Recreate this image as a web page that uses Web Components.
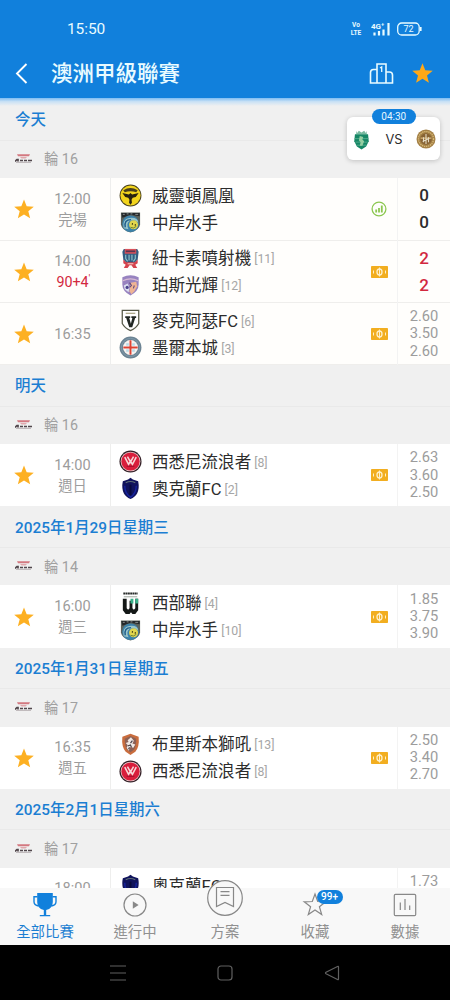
<!DOCTYPE html>
<html lang="zh-Hant">
<head>
<meta charset="utf-8">
<meta name="viewport" content="width=device-width, initial-scale=1">
<title>澳洲甲級聯賽</title>
<style>
    html, body { margin: 0; height: 100%; }
    body {
        overflow: hidden;
        background: #f0f0f0;
        font-family: Roboto, "Noto Sans CJK TC", sans-serif;
        color: #2c2c2c;
    }
</style>
</head>
<body>
<league-page>
    <app-bar slot="header" time="15:50">澳洲甲級聯賽</app-bar>
    <match-day round="輪 16">今天
        <match-row slot="rows" time="12:00" state="完場" icon="stats" tint>
            <team-line crest="phoenix">威靈頓鳳凰</team-line>
            <team-line crest="mariners">中岸水手</team-line>
            <b slot="odds">0</b><b slot="odds">0</b>
        </match-row>
        <match-row slot="rows" time="14:00" state="90+4" icon="pitch" tint live>
            <team-line crest="jets" rank="[11]">紐卡素噴射機</team-line>
            <team-line crest="glory" rank="[12]">珀斯光輝</team-line>
            <b slot="odds">2</b><b slot="odds">2</b>
        </match-row>
        <match-row slot="rows" time="16:35" icon="pitch" tint>
            <team-line crest="macarthur" rank="[6]">麥克阿瑟FC</team-line>
            <team-line crest="city" rank="[3]">墨爾本城</team-line>
            <span slot="odds">2.60</span><span slot="odds">3.50</span><span slot="odds">2.60</span>
        </match-row>
    </match-day>
    <match-day round="輪 16">明天
        <match-row slot="rows" time="14:00" state="週日" icon="pitch">
            <team-line crest="wanderers" rank="[8]">西悉尼流浪者</team-line>
            <team-line crest="auckland" rank="[2]">奧克蘭FC</team-line>
            <span slot="odds">2.63</span><span slot="odds">3.60</span><span slot="odds">2.50</span>
        </match-row>
    </match-day>
    <match-day round="輪 14">2025年1月29日星期三
        <match-row slot="rows" time="16:00" state="週三" icon="pitch">
            <team-line crest="western" rank="[4]">西部聯</team-line>
            <team-line crest="mariners" rank="[10]">中岸水手</team-line>
            <span slot="odds">1.85</span><span slot="odds">3.75</span><span slot="odds">3.90</span>
        </match-row>
    </match-day>
    <match-day round="輪 17">2025年1月31日星期五
        <match-row slot="rows" time="16:35" state="週五" icon="pitch">
            <team-line crest="roar" rank="[13]">布里斯本獅吼</team-line>
            <team-line crest="wanderers" rank="[8]">西悉尼流浪者</team-line>
            <span slot="odds">2.50</span><span slot="odds">3.40</span><span slot="odds">2.70</span>
        </match-row>
    </match-day>
    <match-day round="輪 17">2025年2月1日星期六
        <match-row slot="rows" time="18:00" icon="none" clipped>
            <team-line crest="auckland">奧克蘭FC</team-line>
            <span slot="odds">1.73</span>
        </match-row>
    </match-day>
    <match-float slot="float" time="04:30">VS</match-float>
    <tab-bar slot="footer">
        <tab-item icon="cup" active>全部比賽</tab-item>
        <tab-item icon="play">進行中</tab-item>
        <tab-item icon="plan" raised>方案</tab-item>
        <tab-item icon="star" badge="99+">收藏</tab-item>
        <tab-item icon="chart">數據</tab-item>
    </tab-bar>
    <system-keys slot="footer"></system-keys>
</league-page>

<script>
const STAR = 'M12 1.2l2.9 7.3 7.8.5-6 5 2 7.6-6.7-4.2-6.7 4.2 2-7.6-6-5 7.8-.5z';

const CRESTS = {
    phoenix: `
        <circle cx="12" cy="12" r="11.4" fill="#4b4320"/><circle cx="12" cy="12" r="10.5" fill="#f2d41c"/>
        <path d="M4.5 6.5Q12 2 19.500 6.500L18 8.600Q12 6.600 6 8.600z" fill="#4a401c"/>
        <path d="M3.500 9.500L10.300 11l1.700-1.600 1.700 1.600 6.800-1.500-3 4-3.200.9-1.200 2 .4 3.200-1.500 2-1.500-2 .4-3.200-1.200-2-3.200-.9z" fill="#29230f"/>`,
    mariners: `
        <path d="M2 1.500h20V14q-1 6-10 8.500Q3 20 2 14z" fill="#5a625b"/>
        <path d="M2.500 2h19v3.500L12 4 3.500 7z" fill="#24282b"/>
        <path d="M4 3.500h2M8 3h2M12 3h2M17 3.500h3" stroke="#aab0ac" stroke-width=".8"/>
        <circle cx="12" cy="13.300" r="8.700" fill="#3c82aa"/>
        <path d="M5 18Q3 7 13 7q7 0 7 5-4-4-9-1.500-4 3-1 8.500z" fill="#9bc6c9"/>
        <path d="M6.500 17Q5 9 12.500 9" fill="none" stroke="#205f8c" stroke-width="1.500"/>
        <circle cx="15.200" cy="14.300" r="4.700" fill="#e1d54c"/><path d="M12 17q3 2 6-1" fill="none" stroke="#48682e" stroke-width=".8"/>
        <circle cx="14" cy="13.500" r=".7"/><circle cx="17" cy="14.500" r=".7"/>`,
    jets: `
        <path d="M5 2h14l1.500 3-1 8-3.500 4h-8l-3.500-4-1-8z" fill="#335d82"/>
        <path d="M6 2h12v5H6z" fill="#d8525b"/><path d="M7 4.500h10" stroke="#5b3450" stroke-width="1.800"/>
        <path d="M7 8v4l2 3M10.500 8v6M13.500 8v6M17 8v4l-2 3" stroke="#8bc4cc" stroke-width="1.200" fill="none"/>
        <path d="M4.500 13l3 3h9l3-3v4l-2.500 1.500L19 22h-4l-2-3h-2l-2 3H5l2-3.500L4.500 17z" fill="#d5434d"/>
        <path d="M9 17.500h6" stroke="#f6c0b8" stroke-width="1.200"/>`,
    glory: `
        <path d="M3.500 3.500Q12-1 20.500 3.500V11q0 7-8.500 11.500Q3.500 18 3.500 11z" fill="#9883bf"/>
        <path d="M4 7Q12 3 20 7" stroke="#d8bbd3" stroke-width="1.300" fill="none"/>
        <path d="M12 9l6-1 1 5-3 5-3 3-2-3z" fill="#efb494"/>
        <path d="M5 12l4-2 2 4-1 5-4-3z" fill="#dce0ef"/>
        <circle cx="8.500" cy="14" r="1.700" fill="#4d438d"/><path d="M11 9l2 3-2 2m5-2l-1 3" stroke="#60497d" stroke-width="1.100" fill="none"/>`,
    macarthur: `
        <path d="M3.400 1.500h17.200v13.700q-2.600 4.800-8.600 7.300-6-2.500-8.600-7.300z" fill="#fff" stroke="#555847" stroke-width="1.300"/>
        <path d="M7 4.500h10" stroke="#aaa586" stroke-width="1.300"/>
        <path d="M6.500 7.500h5.200v2h-1l1.700 6 1.500-6h-1v-2h5v2h-1L13.800 19h-3.100L7.500 9.500h-1z" fill="#202623"/>`,
    city: `
        <circle cx="12" cy="12" r="11.400" fill="#6c8392"/><circle cx="12" cy="12" r="9.500" fill="none" stroke="#7e9aab" stroke-width="1"/>
        <circle cx="12" cy="12" r="7.800" fill="#f6f1ee"/><path d="M7.500 7.500h9v9h-9z" fill="#b9dbe8"/>
        <path d="M12 4.500v15M4.500 12h15" stroke="#fff" stroke-width="3.400"/><path d="M12 4.500v15M4.500 12h15" stroke="#dc4333" stroke-width="2.100"/>`,
    wanderers: `
        <circle cx="12" cy="12" r="11.500" fill="#342027"/><circle cx="12" cy="12" r="10.300" fill="#e6c7c9"/>
        <circle cx="12" cy="12" r="9.500" fill="#d91e3c"/>
        <path d="M6 7.500l4 7.500 2-3.500 2 3.500 4-7.500M8.800 7l3.200 5.500L15.200 7" fill="none" stroke="#f8d7d8" stroke-width="1.600"/>
        <path d="M8 17h8" stroke="#a20f2d" stroke-width="1.200"/>`,
    auckland: `
        <path d="M9.500 2.500L12 .8l2.500 1.700 5.500 2q1.500 7-1 12.500-2 4-7 6-5-2-7-6Q2.500 11.500 4 4.500z" fill="#10135c"/>
        <path d="M7 6q5-2.500 10 0" fill="none" stroke="#617177" stroke-width="1.100"/>
        <path d="M6 9q0 8 6 12 6-4 6-12" fill="none" stroke="#1724a0" stroke-width="1.400"/><path d="M12 8v11" stroke="#08093c" stroke-width="2"/>`,
    western: `
        <path d="M4.500 1.500h15" stroke="#292d2b" stroke-width="2" stroke-dasharray="2 .4"/>
        <path d="M5 5h14" stroke="#9ba39b" stroke-width="1"/>
        <path d="M4 7h4v10l1.500 1.500L11 17V9h3v8l1.500 1.500L17 17V7h3v12l-3 4h-3l-1.500-2-1.500 2H7l-3-4z" fill="#141817"/>
        <path d="M12 7h3v5h-3zM17 7h3v5h-3z" fill="#38b18a"/>`,
    roar: `
        <path d="M3.500 4L12 .8 20.500 4q1 11-3.500 15.500L12 23l-5-3.500Q2.500 15 3.500 4z" fill="#c96d3e"/>
        <path d="M6 6l6-2.800L18 6q0 8-2.500 11.500L12 20l-3.500-2.500Q6 14 6 6z" fill="#8c6156"/>
        <path d="M12.500 4.500l3 3.500-1.500 3 3 1-2 3.500-3-1-2 4-2-3 1-3-2-2 3-1-1-2z" fill="#f1e8e4"/>
        <path d="M14 8l-2 2.500m-3 3l3-1 1 2.500m-3 2l1-2" stroke="#423c43" stroke-width="1.200" fill="none"/>`,
    sporting: `
        <path d="M6 2l1 2.500L9 2l3 2 3-2 2 2.500L18 2v4H6z" fill="#78b99f"/>
        <path d="M4.500 6h15l.8 8-3 6-5.300 3.500L6.700 20l-3-6z" fill="#168765"/>
        <path d="M4 11h16M5 15h14M6.500 18.500h11" stroke="#58ad90" stroke-width="1"/>
        <path d="M10 8l4 1-1 3 2 2-2 5h-3l1-4-2-2z" fill="#95cfa2"/>`,
    nacional: `
        <circle cx="12" cy="12" r="11.400" fill="#a48046"/><circle cx="12" cy="12" r="9" fill="none" stroke="#d9bc79" stroke-width="1.500" stroke-dasharray="1.500 1"/>
        <circle cx="12" cy="12" r="7" fill="#876334"/><path d="M5.500 10h13v2h-13z" fill="#c4a26a"/>
        <path d="M12 6v12M9 10v6M15 10v6M8 15l8-4" stroke="#e5dbc2" stroke-width="1.300"/>`
};

const TABS = {
    cup: `
        <path d="M6.200 2h15.600v9q0 6.500-6.600 8v5h4v1.300H8.800V24h4v-5q-6.600-1.500-6.600-8z" fill="#1180dc"/>
        <path d="M6.500 5.700H3v5q0 3.500 4.500 4.300M21.500 5.700H25v5q0 3.500-4.500 4.300" fill="none" stroke="#1180dc" stroke-width="1.400"/>`,
    play: `<circle cx="14" cy="14" r="11"/><path d="M11.800 10.200v7.600l5.800-3.800z" fill="#888" stroke="none"/>`,
    plan: `<circle cx="19" cy="19" r="17.300" fill="#f8f8f8"/><path d="M10.500 8.500h17V27.500L19 23.500l-8.500 4z"/><path d="M14.500 12.700h9M14.500 16.300h9"/>`,
    star: `<path d="M14 3l2.700 7.500 8.100.3-6.400 4.900 2.300 7.900L14 19l-6.700 4.600 2.300-7.900-6.400-4.900 8.100-.3z"/>`,
    chart: `<rect x="3.300" y="3.300" width="21.400" height="21.400" rx="1.200"/><path d="M9.300 11.500v7.500M14 8v11M18.700 14.500v4.500"/>`
};

class LeaguePage extends HTMLElement {
    constructor() {
        super();
        this.attachShadow({ mode: 'open' });
        this.shadowRoot.innerHTML = `
            <style>
                :host { display: grid; grid-template-rows: 98px 789.500px auto; height: 1000px; position: relative; }
                .list { overflow: hidden; padding-top: 1.300px; box-sizing: border-box; }
                .head { z-index: 2; }
                .foot { z-index: 1; }
            </style>
            <div class="head"><slot name="header"></slot></div>
            <div class="list"><slot></slot></div>
            <div class="foot"><slot name="footer"></slot></div>
            <slot name="float"></slot>
        `;
    }
}

class AppBar extends HTMLElement {
    constructor() {
        super();
        this.attachShadow({ mode: 'open' });
    }

    connectedCallback() {
        this.shadowRoot.innerHTML = `
            <style>
                :host { display: block; position: relative; height: 98px; background: #1180dc; color: #e9fbff; }
                .status { display: flex; align-items: center; height: 50px; padding: 7px 28px 0 67px; box-sizing: border-box; }
                .clock { flex: 1; font-size: 15.500px; letter-spacing: -.1px; }
                .volte { display: grid; font: bold 6.500px/8px Roboto; text-align: center; width: 12px; margin-right: 9px; }
                .sig { display: block; margin-right: 6px; }
                .batt { display: block; }
                .bar { display: flex; align-items: center; height: 48px; padding: 0 16px 0 15px; box-sizing: border-box; }
                .back { margin-right: 23px; }
                h1 { flex: 1; margin: 0; font-size: 21.500px; line-height: 30px; font-weight: 500; }
                .podium { margin-right: 17px; }
                svg { display: block; }
                /* soft edge that falls over the list */
                .edge { position: absolute; top: 98px; left: 0; right: 0; height: 8px; background: linear-gradient(#7dbcf2, #c9e1f5 45%, #f0f0f000); }
            </style>
            <div class="status">
                <span class="clock">${this.getAttribute('time')}</span>
                <div class="volte"><span>Vo</span><span>LTE</span></div>
                <svg class="sig" width="20" height="14" viewBox="0 0 20 14">
                    <text x="0" y="6.800" font-family="Roboto" font-size="8" font-weight="700" fill="#e9fbff">4G⁺</text>
                    <path d="M3.500 13.500v-3M8 13.500V9M12.500 13.500V7.500M17.500 13.500V1" stroke="#e9fbff" stroke-width="2.200"/>
                </svg>
                <svg class="batt" width="25" height="14" viewBox="0 0 25 14">
                    <rect x=".7" y="1" width="21.500" height="12" rx="4" fill="none" stroke="#e9fbff" stroke-width="1.300"/>
                    <path d="M23.800 5v4" stroke="#e9fbff" stroke-width="1.600"/>
                    <text x="11.500" y="10.300" text-anchor="middle" font-family="Roboto" font-size="9" fill="#e9fbff">72</text>
                </svg>
            </div>
            <div class="bar">
                <svg class="back" width="13" height="22" viewBox="0 0 13 22"><path d="M11.500 1L2 10.500l9.500 9.500" fill="none" stroke="#fff" stroke-width="1.900"/></svg>
                <h1><slot></slot></h1>
                <svg class="podium" width="25" height="22" viewBox="0 0 25 22">
                    <path d="M8 20V1h9v19M8 6.500H4.500q-3 0-3 3V20h22v-8q0-3-3-3H17M1.500 20h22" fill="none" stroke="#e9fbff" stroke-width="1.600"/>
                    <path d="M11 5l1.700-1v5" fill="none" stroke="#e9fbff" stroke-width="1.300"/>
                </svg>
                <svg width="23" height="25" viewBox="0 0 24 26"><path d="${STAR}" fill="#ffa817"/></svg>
            </div>
            <div class="edge"></div>
        `;
    }
}

class MatchDay extends HTMLElement {
    constructor() {
        super();
        this.attachShadow({ mode: 'open' });
    }

    connectedCallback() {
        this.shadowRoot.innerHTML = `
            <style>
                :host { display: block; background: #f0f0f0; }
                .date {
                    display: flex; align-items: center; height: 41.400px; padding: 0 0 2px 15px;
                    box-sizing: border-box; border-bottom: 1px solid #e9e9e9;
                    color: #1b7ed2; font-size: 15.400px; font-weight: 500;
                }
                .round { display: flex; align-items: center; gap: 12px; height: 37.500px; padding: 0 0 3px 15px; box-sizing: border-box; color: #a0a0a0; font-size: 14.300px; }
                svg { display: block; }
            </style>
            <div class="date"><span><slot></slot></span></div>
            <div class="round">
                <svg width="17" height="10" viewBox="0 0 17 10">
                    <path d="M2 1.200h13l-1 2H3z" fill="#d37880"/><path d="M5 4h7l-1.500 1.500h-4z" fill="#dfa8ad"/>
                    <path d="M0 8.500l2-2h1v2M5 7.500h3M9 7.500h3M13 7.500h4" stroke="#51474c" stroke-width="1.700" fill="none"/>
                    <path d="M1 9.300h15" stroke="#9c9295" stroke-width=".7"/>
                </svg>
                <span>${this.getAttribute('round')}</span>
            </div>
            <slot name="rows"></slot>
        `;
    }
}

class MatchRow extends HTMLElement {
    constructor() {
        super();
        this.attachShadow({ mode: 'open' });
    }

    connectedCallback() {
        const state = this.getAttribute('state');
        const icons = {
            stats: `<svg width="16" height="16" viewBox="0 0 16 16">
                <circle cx="8" cy="8" r="6.900" fill="none" stroke="#8cc751" stroke-width="1.300"/>
                <path d="M5.200 8.500v3M8 7v4.500M10.800 4.500v7" stroke="#8cc751" stroke-width="1.800"/></svg>`,
            pitch: `<svg width="17" height="12" viewBox="0 0 17 12">
                <rect width="17" height="12" rx=".8" fill="#f2ae20"/><ellipse cx="8.500" cy="6" rx="2.500" ry="3" fill="none" stroke="#fff0c9" stroke-width="1.300"/>
                <path d="M8.500 1.500v9M2.500 4.500v3M14.500 4.500v3" stroke="#fff0c9" stroke-width="1"/></svg>`,
            none: ''
        };
        this.shadowRoot.innerHTML = `
            <style>
                :host {
                    display: grid; grid-template-columns: 48px 63px 1fr 36px 53px; height: 62.350px;
                    box-sizing: border-box; background: #fff; color: #2c2c2c; font-weight: 400;
                }
                :host([tint]) { background: #fffefc; box-shadow: inset 0 -1px #efeeec; }
                .star, .icon { display: flex; align-items: center; justify-content: center; }
                .time { display: flex; flex-direction: column; justify-content: center; align-items: center; border-right: 1px solid #eeeeed; padding: 1px 13px 0 0; font-size: 14.300px; line-height: 21px; color: #9c9c9c; }
                .time span:first-child { font-size: 14.600px; }
                :host([live]) .state { color: #d2283f; }
                sup { display: inline-block; width: 0; font-size: 10px; line-height: 0; vertical-align: 5px; }
                .teams { display: flex; flex-direction: column; justify-content: center; padding-left: 8px; }
                .odds { display: flex; flex-direction: column; justify-content: center; align-items: center; border-left: 1px solid #f3f3f3; font-size: 14.700px; line-height: 17.200px; color: #9c9c9c; }
                ::slotted(b) { font-size: 17px; line-height: 27px; font-weight: 500; color: #2c2c2c; }
                :host([live]) ::slotted(b) { color: #d2283f; }
                :host([clipped]) .star svg { display: none; }
                :host([clipped]) .time { justify-content: flex-start; padding-top: 10px; }
                :host([clipped]) .teams { justify-content: flex-start; padding-top: 4.500px; }
                :host([clipped]) .odds { justify-content: flex-start; padding-top: 5.500px; }
            </style>
            <div class="star"><svg width="22" height="22" viewBox="0 0 24 23"><path d="${STAR}" fill="#fdb022"/></svg></div>
            <div class="time">
                <span>${this.getAttribute('time')}</span>
                ${state ? `<span class="state">${state}${this.hasAttribute('live') ? '<sup>\'</sup>' : ''}</span>` : ''}
            </div>
            <div class="teams"><slot></slot></div>
            <div class="icon">${icons[this.getAttribute('icon')]}</div>
            <div class="odds"><slot name="odds"></slot></div>
        `;
    }
}

class TeamLine extends HTMLElement {
    constructor() {
        super();
        this.attachShadow({ mode: 'open' });
    }

    connectedCallback() {
        this.shadowRoot.innerHTML = `
            <style>
                :host { display: flex; align-items: center; height: 27px; font-size: 16.550px; line-height: 24px; white-space: nowrap; }
                club-crest { margin-right: 10px; }
                .name { padding-top: 2px; }
                .rank { margin: 2px 0 0 3px; font-size: 12.300px; color: #a6a6a6; }
            </style>
            <club-crest name="${this.getAttribute('crest')}"></club-crest>
            <span class="name"><slot></slot></span>
            <span class="rank">${this.getAttribute('rank') || ''}</span>
        `;
    }
}

class ClubCrest extends HTMLElement {
    constructor() {
        super();
        this.attachShadow({ mode: 'open' });
    }

    connectedCallback() {
        const size = this.getAttribute('size') || 23;
        this.shadowRoot.innerHTML = `
            <style>
                :host { display: block; flex: none; }
                svg { display: block; }
            </style>
            <svg width="${size}" height="${size}" viewBox="0 0 24 24">${CRESTS[this.getAttribute('name')]}</svg>
        `;
    }
}

/* Small card floating over the list with the next followed match */
class MatchFloat extends HTMLElement {
    constructor() {
        super();
        this.attachShadow({ mode: 'open' });
    }

    connectedCallback() {
        this.shadowRoot.innerHTML = `
            <style>
                :host {
                    position: absolute; top: 117px; right: 10px; width: 93px; height: 43px; box-sizing: border-box;
                    display: flex; align-items: center; justify-content: space-between; padding: 1px 4px 0;
                    background: #fff; border-radius: 6px; box-shadow: 0 1px 5px rgba(0, 0, 0, .2);
                    font-family: Inter, sans-serif; font-size: 12.800px; z-index: 1;
                }
                .pill {
                    position: absolute; top: -8px; left: 25px; width: 43.500px; height: 15px; border-radius: 8px;
                    background: #1180dc; color: #e6f7ff; font: 10px/15.500px Roboto, sans-serif; text-align: center;
                }
            </style>
            <club-crest name="sporting" size="21"></club-crest>
            <span><slot></slot></span>
            <club-crest name="nacional" size="20"></club-crest>
            <div class="pill">${this.getAttribute('time')}</div>
        `;
    }
}

class TabBar extends HTMLElement {
    constructor() {
        super();
        this.attachShadow({ mode: 'open' });
        this.shadowRoot.innerHTML = `
            <style>
                :host { display: grid; grid-template-columns: repeat(5, 1fr); height: 57.500px; background: #f8f8f8; }
            </style>
            <slot></slot>
        `;
    }
}

class TabItem extends HTMLElement {
    constructor() {
        super();
        this.attachShadow({ mode: 'open' });
    }

    connectedCallback() {
        const raised = this.hasAttribute('raised');
        const size = raised ? 38 : 28;
        const badge = this.getAttribute('badge');
        this.shadowRoot.innerHTML = `
            <style>
                :host { display: flex; flex-direction: column; align-items: center; position: relative; padding-top: 3.500px; color: #909090; font-size: 14.400px; line-height: 20px; }
                :host([active]) { color: #1b7ed2; }
                svg { display: block; flex: none; margin-bottom: 4px; }
                :host([raised]) svg { margin-top: -12px; margin-bottom: 6px; }
                .badge {
                    position: absolute; top: 2.500px; left: 46.500px; width: 26px; height: 14px; border-radius: 7px;
                    background: #1180dc; color: #fff; font-size: 10px; line-height: 14.500px; font-weight: 500; text-align: center;
                }
            </style>
            <svg width="${size}" height="${size}" viewBox="0 0 ${size} ${size}" fill="none" stroke-width="1.200" ${this.hasAttribute('active') ? '' : 'stroke="#888"'}>${TABS[this.getAttribute('icon')]}</svg>
            <span><slot></slot></span>
            ${badge ? `<div class="badge">${badge}</div>` : ''}
        `;
    }
}

class SystemKeys extends HTMLElement {
    constructor() {
        super();
        this.attachShadow({ mode: 'open' });
        this.shadowRoot.innerHTML = `
            <style>
                :host { display: flex; justify-content: center; align-items: center; gap: 91px; height: 55px; background: #000; }
                svg { display: block; }
            </style>
            <svg width="16" height="16" viewBox="0 0 16 16"><path d="M0 1h16M0 8h16M0 15h16" stroke="#606060" stroke-width="1.100"/></svg>
            <svg width="16" height="16" viewBox="0 0 16 16"><rect x="1" y="1" width="14" height="14" rx="3" fill="none" stroke="#606060" stroke-width="1.200"/></svg>
            <svg width="16" height="16" viewBox="0 0 16 16"><path d="M14.500 2v12q0 1-1 .5L2 8.700Q1 8 2 7.300l11.500-5.800q1-.5 1 .5z" fill="none" stroke="#606060" stroke-width="1.200"/></svg>
        `;
    }
}

customElements.define('club-crest', ClubCrest);
customElements.define('team-line', TeamLine);
customElements.define('match-row', MatchRow);
customElements.define('match-day', MatchDay);
customElements.define('app-bar', AppBar);
customElements.define('match-float', MatchFloat);
customElements.define('tab-item', TabItem);
customElements.define('tab-bar', TabBar);
customElements.define('system-keys', SystemKeys);
customElements.define('league-page', LeaguePage);
</script>
</body>
</html>
